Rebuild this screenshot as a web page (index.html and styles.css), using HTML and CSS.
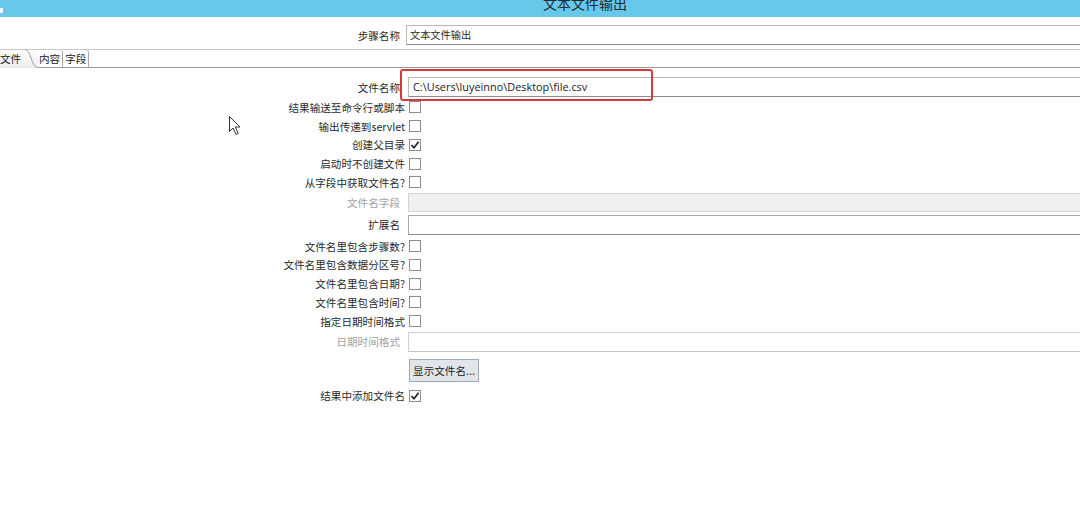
FILE: index.html
```html
<!DOCTYPE html>
<html lang="zh">
  <head>
    <meta charset="UTF-8" />
    <title>文本文件输出</title>
    <link rel="stylesheet" href="styles.css">
  </head>
  <body>
    <div class="titlebar">
      <span class="app-icon"></span>
      <span class="title">文本文件输出</span>
    </div>

    <div class="step-row">
      <span class="step-label">步骤名称</span>
      <div class="text-box step-box">文本文件输出</div>
    </div>

    <div class="tab-strip">
      <div class="tab active">
        <span>文件</span>
        <svg class="tab-curve" width="14" height="19" viewBox="0 0 14 19">
          <path d="M0 0.5 C6 0.5 6 18 13 18.5" fill="none" stroke="#9c9c9c" />
        </svg>
      </div>
      <div class="tab">内容</div>
      <div class="tab">字段</div>
    </div>

    <div class="form">
      <div class="row row-file">
        <span class="label field-label">文件名称</span>
        <div class="cell">
          <div class="text-box file-box">C:\Users\luyeinno\Desktop\file.csv</div>
          <div class="highlight"></div>
        </div>
      </div>

      <div class="row">
        <span class="label">结果输送至命令行或脚本</span>
        <span class="check"></span>
      </div>
      <div class="row">
        <span class="label">输出传递到servlet</span>
        <span class="check"></span>
      </div>
      <div class="row">
        <span class="label">创建父目录</span>
        <span class="check checked">
          <svg width="10" height="10" viewBox="0 0 10 10"><path d="M1.5 5.2 L4 7.8 L8.6 1.8" fill="none" stroke="#222" stroke-width="1.7" /></svg>
        </span>
      </div>
      <div class="row">
        <span class="label">启动时不创建文件</span>
        <span class="check"></span>
      </div>
      <div class="row">
        <span class="label">从字段中获取文件名?</span>
        <span class="check"></span>
      </div>

      <div class="row row-field">
        <span class="label field-label disabled">文件名字段</span>
        <div class="cell"><div class="text-box disabled-box"></div></div>
      </div>
      <div class="row row-field">
        <span class="label field-label">扩展名</span>
        <div class="cell"><div class="text-box ext-box"></div></div>
      </div>

      <div class="row first-after-field">
        <span class="label">文件名里包含步骤数?</span>
        <span class="check"></span>
      </div>
      <div class="row">
        <span class="label">文件名里包含数据分区号?</span>
        <span class="check"></span>
      </div>
      <div class="row">
        <span class="label">文件名里包含日期?</span>
        <span class="check"></span>
      </div>
      <div class="row">
        <span class="label">文件名里包含时间?</span>
        <span class="check"></span>
      </div>
      <div class="row">
        <span class="label">指定日期时间格式</span>
        <span class="check"></span>
      </div>

      <div class="row row-field">
        <span class="label field-label disabled">日期时间格式</span>
        <div class="cell"><div class="text-box light-box"></div></div>
      </div>

      <div class="row row-button">
        <span class="label"></span>
        <button class="show-btn">显示文件名...</button>
      </div>

      <div class="row row-last">
        <span class="label">结果中添加文件名</span>
        <span class="check checked">
          <svg width="10" height="10" viewBox="0 0 10 10"><path d="M1.5 5.2 L4 7.8 L8.6 1.8" fill="none" stroke="#222" stroke-width="1.7" /></svg>
        </span>
      </div>
    </div>

    <!-- mouse pointer left in the screenshot -->
    <svg class="cursor" width="13" height="20" viewBox="0 0 13 20">
      <path d="M0.5 0.5 L0.5 15.5 L4 12 L7 18.5 L9.2 17.5 L6.3 11 L11 11 Z" fill="#fff" stroke="#333" stroke-width="1" />
    </svg>
  </body>
</html>
```

FILE: styles.css
```css
* {
  margin: 0;
  padding: 0;
  box-sizing: border-box;
}

body {
  font-family: "Noto Sans CJK SC", "Noto Sans", sans-serif;
  font-size: 10.6px;
  color: #2a2a2a;
  background-color: #fff;
  width: 1080px;
  height: 516px;
  overflow: hidden;
  position: relative;
}

/* Window title */
.titlebar {
  height: 17px;
  background-color: #66c9e9;
  position: relative;
  overflow: hidden;
  text-align: center;
  padding-left: 90px;
}

.app-icon {
  position: absolute;
  left: -2px;
  top: 8px;
  width: 5px;
  height: 5px;
  background-color: #f4f8fa;
}

.title {
  display: block;
  font-size: 14px;
  line-height: 14px;
  margin-top: -4px;
  color: #1e2a30;
}

/* Step name */
.step-row {
  display: flex;
  align-items: center;
  margin-top: 8px;
  height: 20px;
}

.step-label {
  width: 401px;
  text-align: right;
  padding-right: 1px;
}

.text-box {
  height: 20px;
  border: 1px solid #b9b9b9;
  border-bottom-color: #8c8c8c;
  border-right: none;
  background-color: #fff;
  padding-left: 3px;
  font-size: 10.2px;
  line-height: 18px;
  white-space: nowrap;
}

.step-box {
  flex: 1;
  margin-left: 5px;
}

/* Tabs */
.tab-strip {
  display: flex;
  height: 19px;
  margin-top: 4px;
  border-top: 1px solid #c9c9c9;
  border-bottom: 1px solid #9c9c9c;
  font-size: 10.6px;
  line-height: 17px;
}

.tab {
  padding: 0 2px 0 2px;
  border-right: 1px solid #a8a8a8;
  border-top-right-radius: 3px;
  color: #222;
}

.tab.active {
  position: relative;
  width: 38px;
  padding-left: 0;
  border-right: none;
  background: linear-gradient(#ffffff, #ececec);
  margin-bottom: -1px;
}

.tab-curve {
  position: absolute;
  right: -1px;
  top: -1px;
}

.tab:nth-child(2) {
  padding-left: 1px;
}

/* Form rows */
.form {
  padding-top: 9px;
}

.row {
  display: flex;
  align-items: center;
  height: 18.75px;
}

.label {
  width: 405px;
  flex-shrink: 0;
  text-align: right;
  white-space: nowrap;
  margin-right: 4px;
}

.field-label {
  padding-right: 5px;
  margin-right: 3px;
}

.disabled {
  color: #a3a3a3;
}

.cell {
  flex: 1;
  position: relative;
  height: 20px;
}

.row-file {
  height: 20px;
  margin-bottom: 1px;
}

.row-field {
  height: 22px;
}

.first-after-field {
  margin-top: 1px;
}

.file-box {
  font-family: "Open Sans", "Noto Sans", sans-serif;
  font-size: 10.9px;
  padding-left: 4px;
  color: #1a1a1a;
}

.disabled-box {
  background-color: #f0f0f0;
  border-color: #d4d4d4;
  height: 19px;
}

.ext-box {
  border-color: #a9a9a9;
  border-bottom-color: #8a8a8a;
}

.light-box {
  border-color: #d0d0d0;
  border-bottom-color: #c4c4c4;
}

/* Annotation around the file name */
.highlight {
  position: absolute;
  left: -8px;
  top: -8px;
  width: 253px;
  height: 32px;
  border: 2px solid #d63b3b;
  border-radius: 3px;
  pointer-events: none;
}

/* Checkboxes */
.check {
  width: 12px;
  height: 12px;
  border: 1px solid #8d8d8d;
  background-color: #fff;
  display: flex;
  align-items: center;
  justify-content: center;
}

/* Button */
.row-button {
  height: 23px;
  margin-top: 6px;
}

.show-btn {
  height: 23px;
  width: 70px;
  font-family: inherit;
  font-size: 10.6px;
  color: #222;
  background-color: #e1e5ea;
  border: 1px solid #9aabbb;
  margin-left: 0;
}

.row-last {
  margin-top: 5px;
}

.cursor {
  position: absolute;
  left: 229px;
  top: 116px;
}
```
